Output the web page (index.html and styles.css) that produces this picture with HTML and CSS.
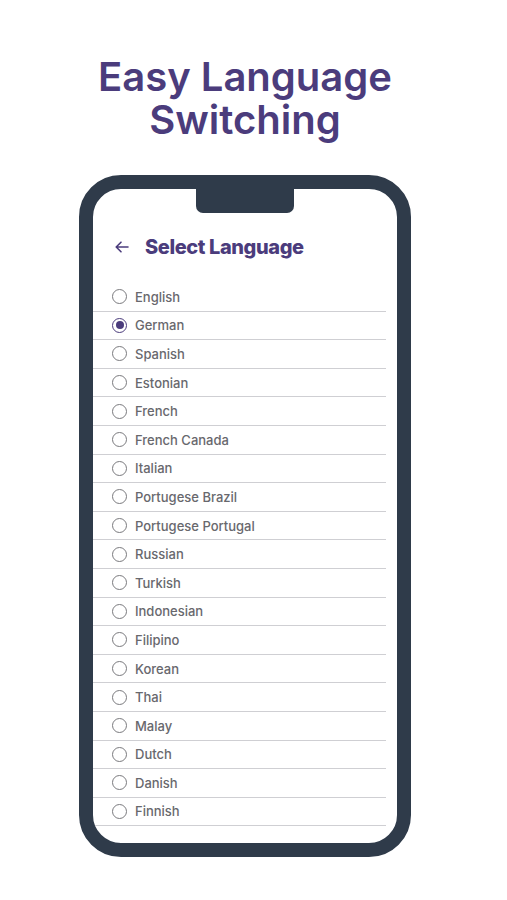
FILE: index.html
```html
<!DOCTYPE html>
<html lang="en">
<head>
    <meta charset="UTF-8">
    <title>Easy Language Switching</title>
    <link rel="stylesheet" href="styles.css">
</head>
<body>
    <div class="pagina">
        <h1 class="titulo">Easy Language<br>Switching</h1>

        <!-- Marco del teléfono -->
        <div class="telefono">
            <div class="notch"></div>

            <div class="cabecera">
                <svg class="flecha" width="14" height="12" viewBox="0 0 14 12">
                    <path d="M13 6H1.5M6 1.2L1.2 6L6 10.8" fill="none" stroke="#4b3c7c" stroke-width="1.6" stroke-linecap="round" stroke-linejoin="round"/>
                </svg>
                <span>Select Language</span>
            </div>

            <ul class="lista-idiomas">
                <li><span class="radio"></span>English</li>
                <li><span class="radio activo"></span>German</li>
                <li><span class="radio"></span>Spanish</li>
                <li><span class="radio"></span>Estonian</li>
                <li><span class="radio"></span>French</li>
                <li><span class="radio"></span>French Canada</li>
                <li><span class="radio"></span>Italian</li>
                <li><span class="radio"></span>Portugese Brazil</li>
                <li><span class="radio"></span>Portugese Portugal</li>
                <li><span class="radio"></span>Russian</li>
                <li><span class="radio"></span>Turkish</li>
                <li><span class="radio"></span>Indonesian</li>
                <li><span class="radio"></span>Filipino</li>
                <li><span class="radio"></span>Korean</li>
                <li><span class="radio"></span>Thai</li>
                <li><span class="radio"></span>Malay</li>
                <li><span class="radio"></span>Dutch</li>
                <li><span class="radio"></span>Danish</li>
                <li><span class="radio"></span>Finnish</li>
            </ul>
        </div>
    </div>
</body>
</html>
```

FILE: styles.css
```css
body {
    margin: 0;
    background: #fff;
    font-family: Inter, "Noto Sans", Arial, sans-serif;
}

.pagina {
    width: 332px;
    margin-left: 79px;
    padding-top: 55px;
}

.titulo {
    margin: 0 -60px 34px -60px;
    text-align: center;
    font-size: 40px;
    line-height: 43px;
    font-weight: 600;
    letter-spacing: 0;
    color: #4b3c7c;
}

.telefono {
    box-sizing: border-box;
    width: 332px;
    height: 682px;
    border: 14px solid #2f3b4a;
    border-radius: 42px;
    background: #fff;
    overflow: hidden;
}

.notch {
    width: 98px;
    height: 24px;
    margin: 0 auto;
    background: #2f3b4a;
    border-radius: 0 0 7px 7px;
}

.cabecera {
    display: flex;
    align-items: center;
    gap: 16px;
    padding: 21px 0 0 22px;
    height: 26px;
}

.cabecera span {
    font-size: 20px;
    font-weight: 800;
    letter-spacing: -0.4px;
    color: #4b3c7c;
}

.lista-idiomas {
    list-style: none;
    margin: 23px 11px 0 0;
    padding: 0;
}

.lista-idiomas li {
    display: flex;
    align-items: center;
    gap: 8px;
    height: 27.6px;
    padding-left: 19px;
    border-bottom: 1px solid #cfcfd3;
    font-size: 13px;
    font-weight: 500;
    color: #68686d;
}

.radio {
    box-sizing: border-box;
    width: 15px;
    height: 15px;
    border: 1.5px solid #7a7a7e;
    border-radius: 50%;
    display: flex;
    align-items: center;
    justify-content: center;
}

.radio.activo {
    border-color: #4b3c7c;
}

.radio.activo::after {
    content: "";
    width: 8px;
    height: 8px;
    border-radius: 50%;
    background: #4b3c7c;
}
```
